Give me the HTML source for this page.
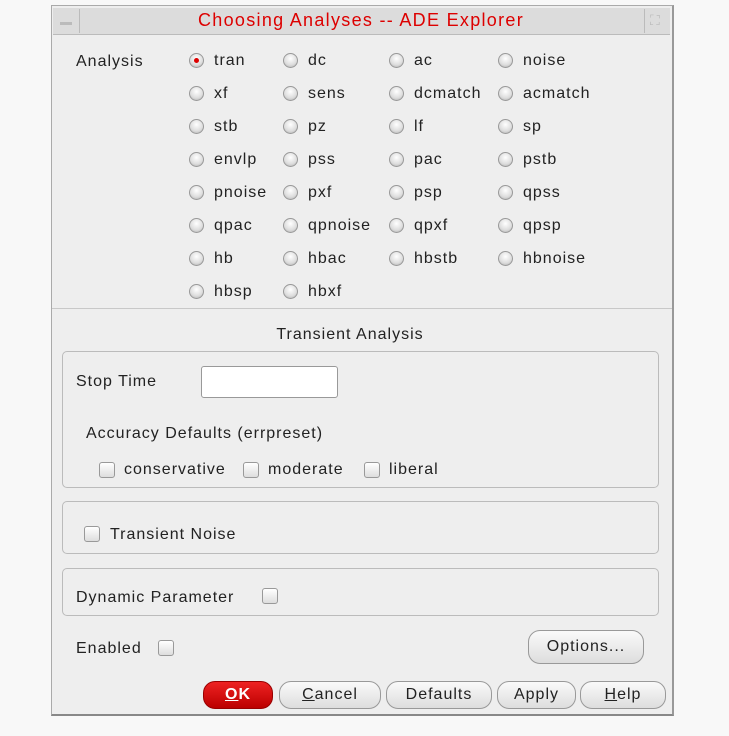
<!DOCTYPE html>
<html><head><style>
body{margin:0;width:729px;height:736px;background:#f8f8f8;font-family:"Liberation Sans",sans-serif;font-size:16px;letter-spacing:1px;color:#222;position:relative;overflow:hidden}
.a{position:absolute;white-space:nowrap}
.win{position:absolute;left:51px;top:5px;width:620px;height:708px;background:#eeeeee;border:1px solid #aaa;border-bottom:2px solid #888;border-right:2px solid #999}
.r{position:absolute;width:15px;height:15px;border-radius:50%;background:radial-gradient(circle at 50% 35%,#fff,#ddd 60%,#aaa);border:1px solid #999;box-sizing:border-box}
.r.on::after{content:"";position:absolute;left:4px;top:4px;width:5px;height:5px;border-radius:50%;background:#d00}
.c{position:absolute;width:16px;height:16px;border:1px solid #999;border-radius:3px;background:linear-gradient(#fff,#ddd);box-sizing:border-box}
.g{position:absolute;border:1px solid #bbb;border-radius:5px;box-sizing:border-box}
.b{position:absolute;height:28px;border:1px solid #999;border-radius:12px;background:linear-gradient(#fafafa,#ddd);box-sizing:border-box;text-align:center;line-height:26px;font-size:16px;color:#222}
</style></head><body>
<div class="win"></div>
<div class="a" style="left:53px;top:8px;width:617px;height:26px;background:#dcdcdc;border-bottom:1px solid #bbb"></div>
<div class="a" style="left:54px;top:9px;width:25px;height:24px;border-right:1px solid #bbb"></div>
<div class="a" style="left:60px;top:22px;width:12px;height:3px;background:#bbb"></div>
<div class="a" style="left:644px;top:9px;width:1px;height:24px;background:#bbb"></div>
<div class="a" style="left:650px;top:12px;color:#bbb;font-size:14px">⛶</div>
<div class="a" style="left:0;width:722px;top:10px;text-align:center;color:#d00;font-size:18px;letter-spacing:1.3px">Choosing Analyses -- ADE Explorer</div>
<div class="a" style="left:76px;top:53px">Analysis</div>
<div id="rad"></div>
<script>
var cols=[189,283,389,498],rows=[53,86,119,152,185,218,251,284];
var names=[["tran","dc","ac","noise"],["xf","sens","dcmatch","acmatch"],["stb","pz","lf","sp"],["envlp","pss","pac","pstb"],["pnoise","pxf","psp","qpss"],["qpac","qpnoise","qpxf","qpsp"],["hb","hbac","hbstb","hbnoise"],["hbsp","hbxf"]];
var h="";names.forEach(function(r,i){r.forEach(function(n,j){h+='<div class="r'+(i+j==0?' on':'')+'" style="left:'+cols[j]+'px;top:'+(rows[i])+'px"></div><div class="a" style="left:'+(cols[j]+25)+'px;top:'+(rows[i]-1)+'px">'+n+'</div>';});});
document.getElementById('rad').innerHTML=h;
</script>
<div class="a" style="left:52px;top:308px;width:620px;height:1px;background:#c8c8c8"></div>
<div class="a" style="left:0;width:700px;top:326px;text-align:center">Transient Analysis</div>
<div class="g" style="left:62px;top:351px;width:597px;height:137px"></div>
<div class="a" style="left:76px;top:373px">Stop Time</div>
<div class="a" style="left:201px;top:366px;width:137px;height:32px;background:#fff;border:1px solid #999;border-radius:3px;box-sizing:border-box"></div>
<div class="a" style="left:86px;top:425px">Accuracy Defaults (errpreset)</div>
<div class="c" style="left:99px;top:462px"></div><div class="a" style="left:124px;top:461px">conservative</div>
<div class="c" style="left:243px;top:462px"></div><div class="a" style="left:268px;top:461px">moderate</div>
<div class="c" style="left:364px;top:462px"></div><div class="a" style="left:389px;top:461px">liberal</div>
<div class="g" style="left:62px;top:501px;width:597px;height:53px"></div>
<div class="c" style="left:84px;top:526px"></div><div class="a" style="left:110px;top:526px">Transient Noise</div>
<div class="g" style="left:62px;top:568px;width:597px;height:48px"></div>
<div class="a" style="left:76px;top:589px">Dynamic Parameter</div>
<div class="c" style="left:262px;top:588px"></div>
<div class="a" style="left:76px;top:640px">Enabled</div>
<div class="c" style="left:158px;top:640px"></div>
<div class="b" style="left:528px;top:630px;width:116px;height:34px;line-height:32px">Options...</div>
<div class="b" style="left:203px;top:681px;width:70px;background:linear-gradient(#e22,#b00);border-color:#900;color:#fff;font-weight:bold"><u>O</u>K</div>
<div class="b" style="left:279px;top:681px;width:102px"><u>C</u>ancel</div>
<div class="b" style="left:386px;top:681px;width:106px">Defaults</div>
<div class="b" style="left:497px;top:681px;width:79px">Apply</div>
<div class="b" style="left:580px;top:681px;width:86px"><u>H</u>elp</div>
</body></html>
